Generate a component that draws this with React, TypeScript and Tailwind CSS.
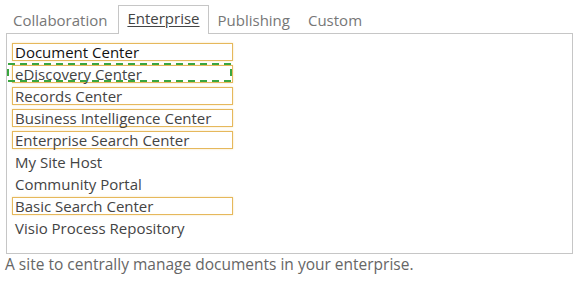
import React from "react";

const items = [
  { label: "Document Center", boxed: true, dark: true },
  { label: "eDiscovery Center", boxed: true, focus: true },
  { label: "Records Center", boxed: true },
  { label: "Business Intelligence Center", boxed: true },
  { label: "Enterprise Search Center", boxed: true },
  { label: "My Site Host" },
  { label: "Community Portal" },
  { label: "Basic Search Center", boxed: true },
  { label: "Visio Process Repository" },
];

export default function App() {
  return (
    <div
      className="w-[580px] h-[281px] bg-white overflow-hidden"
      style={{ fontFamily: '"Open Sans", "Noto Sans", sans-serif' }}
    >
      <div className="flex items-end pl-[4px] pt-[4px] h-[33px] text-[15px] leading-[20px]">
        <div className="pl-[9px] pr-[11px] pb-[3px] text-[#777]">Collaboration</div>
        <div className="relative z-10 px-[8px] pb-[4px] pt-[2px] h-[29px] border border-b-0 border-[#c6c6c6] bg-white text-[#444] mb-[-1px]">
          <span className="underline underline-offset-2">Enterprise</span>
        </div>
        <div className="px-[9px] pb-[3px] text-[#777]">Publishing</div>
        <div className="px-[9px] pb-[3px] text-[#777]">Custom</div>
      </div>
      <div className="ml-[6px] w-[567px] h-[221px] border border-[#c6c6c6] pl-[5px] pt-[9px]">
        <div className="flex flex-col">
          {items.map((it) => (
            <div key={it.label} className="relative h-[22px] flex items-start">
              <div
                className={
                  "w-[221px] h-[18px] pl-[2px] text-[15px] leading-[16px] whitespace-nowrap border " +
                  (it.boxed
                    ? "border-[#e6b85c] shadow-[0_0_2px_#f6e3b4]"
                    : "border-transparent") +
                  (it.dark ? " text-[#111]" : " text-[#444]")
                }
              >
                {it.label}
              </div>
              {it.focus && (
                <svg
                  className="absolute left-[-5px] top-[-2px]"
                  width="226"
                  height="20"
                  viewBox="0 0 226 20"
                >
                  <rect
                    x="1"
                    y="1"
                    width="223"
                    height="17"
                    fill="none"
                    stroke="#3aa63f"
                    strokeWidth="2"
                    strokeDasharray="7 5"
                  />
                </svg>
              )}
            </div>
          ))}
        </div>
      </div>
      <div className="pl-[5px] pt-[1px] text-[15.5px] leading-[18px] text-[#666]">
        A site to centrally manage documents in your enterprise.
      </div>
    </div>
  );
}
